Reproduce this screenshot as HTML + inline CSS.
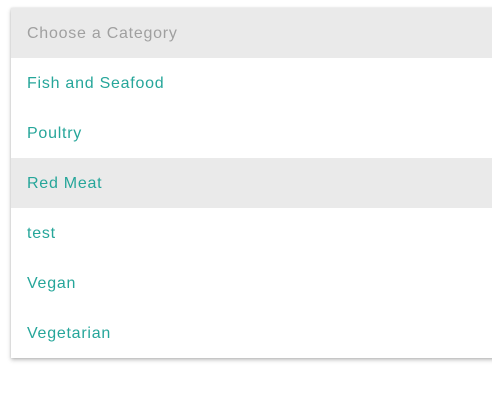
<!DOCTYPE html>
<html><head><style>
html,body{margin:0;padding:0;background:#fff;width:492px;height:405px;overflow:hidden;}
.p{position:absolute;left:11px;top:8px;width:500px;background:#fff;box-shadow:0 2px 4px rgba(0,0,0,0.25),0 0 2px rgba(0,0,0,0.12);}
.r{height:50px;line-height:51px;padding-left:16px;font-family:"Liberation Sans",sans-serif;font-size:16px;color:#26a69a;letter-spacing:0.75px;}
.g{background:#eaeaea;}
.h{color:#a0a0a0;}
</style></head><body>
<div class="p">
<div class="r g h">Choose a Category</div>
<div class="r">Fish and Seafood</div>
<div class="r">Poultry</div>
<div class="r g">Red Meat</div>
<div class="r">test</div>
<div class="r">Vegan</div>
<div class="r">Vegetarian</div>
</div>
</body></html>
